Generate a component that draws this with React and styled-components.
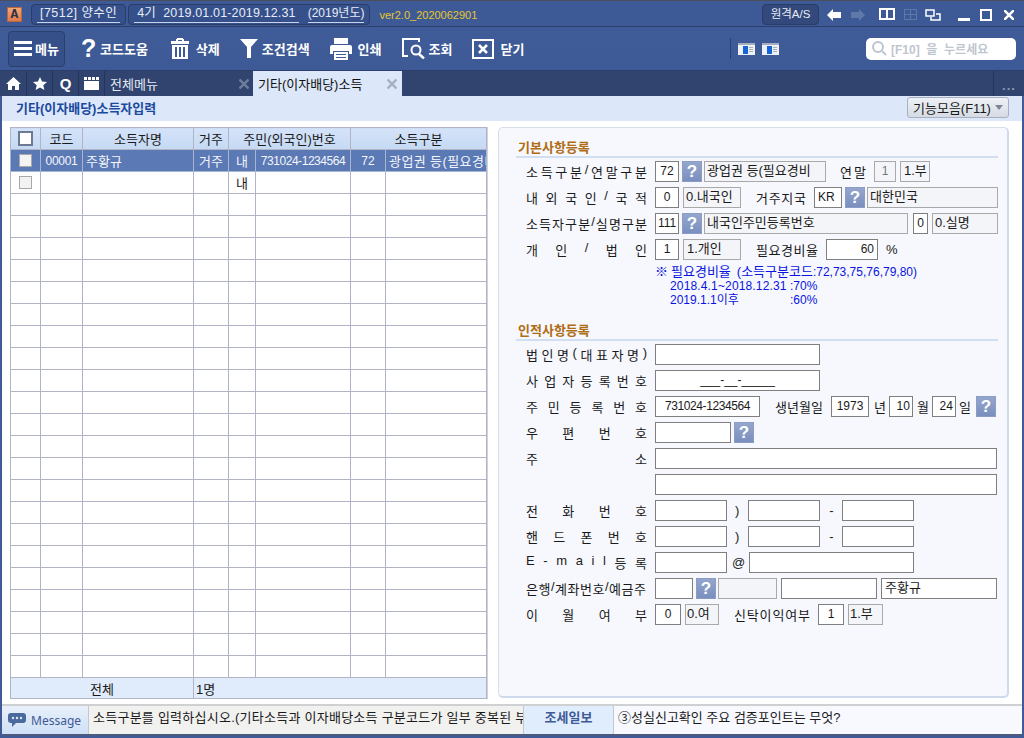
import React from 'react';
import styled, { createGlobalStyle } from 'styled-components';

const GlobalStyle = createGlobalStyle`
  html, body { margin: 0; padding: 0; background: #3f5a96; }
  * { box-sizing: border-box; }
  body {
    font-family: "Liberation Sans", "Noto Sans CJK KR", sans-serif;
    font-size: 13px;
    color: #1a1a1a;
  }
`;

const Window = styled.div`
  width: 1024px;
  height: 738px;
  overflow: hidden;
  display: flex;
  flex-direction: column;
  background: #3f5a96;
`;

/* title bar */
const TitleBar = styled.div`
  height: 26px;
  display: flex;
  align-items: center;
  padding: 2px 0 0 7px;
  background: #3e5a96;
  border-top: 1px solid #4b4f5c;
`;

const Logo = styled.div`
  width: 15px;
  height: 15px;
  background: linear-gradient(#f4a878, #e0794a);
  border: 1px solid #b8673e;
  color: #2c3044;
  font-family: "Liberation Mono", monospace;
  font-size: 13px;
  font-weight: 700;
  line-height: 13px;
  text-align: center;
  margin-right: 9px;
`;

const Pill = styled.div`
  height: 21px;
  display: flex;
  align-items: center;
  gap: 9px;
  padding: 0 5px;
  margin-right: 2px;
  background: #35508a;
  border: 1px solid #2a3c68;
  border-radius: 4px;
`;

const PillText = styled.span`
  height: 17px;
  line-height: 15px;
  padding: 0 ${(p) => p.$pad || 0}px;
  color: #e8ecf6;
  font-size: ${(p) => p.$size || 12.5}px;
  letter-spacing: ${(p) => p.$ls || 0}px;
  border-bottom: 1px solid #c8d2e8;
  white-space: pre;
`;

const Version = styled.span`
  margin-left: 7px;
  color: #e6c62e;
  font-size: 11px;
`;

const TitleRight = styled.div`
  margin-left: auto;
  padding-right: 10px;
  display: flex;
  align-items: center;
`;

const RemoteBtn = styled.div`
  width: 57px;
  height: 21px;
  margin-right: 8px;
  text-align: center;
  line-height: 18px;
  color: #e8ecf6;
  font-size: 11.5px;
  background: #33497c;
  border: 1px solid #2a3c68;
  border-radius: 4px;
`;

const WinIcon = styled.svg`
  display: block;
  margin-left: ${(p) => p.$ml || 0}px;
`;

/* toolbar */
const ToolBar = styled.div`
  height: 45px;
  display: flex;
  align-items: center;
  padding: 0 8px 0 8px;
  background: linear-gradient(#3f5b98, #3e5a96);
  border-top: 1px solid #2c3f6c;
  border-bottom: 1px solid #2c3f6c;
`;

const MenuBtn = styled.div`
  width: 57px;
  height: 36px;
  display: flex;
  align-items: center;
  justify-content: center;
  gap: 3px;
  margin-right: 16px;
  color: #fff;
  font-weight: 700;
  background: #36508a;
  border: 1px solid #2c3f6c;
  border-radius: 4px;
`;

const ToolItem = styled.div`
  display: flex;
  align-items: center;
  gap: ${(p) => p.$gap || 5}px;
  margin-right: ${(p) => p.$mr || 20}px;
  color: #fff;
  font-weight: 700;
  white-space: nowrap;
`;

const QuestionGlyph = styled.span`
  width: 13px;
  font-size: 25px;
  line-height: 25px;
  font-weight: 700;
  font-family: "Liberation Sans", sans-serif;
`;

const ToolRight = styled.div`
  margin-left: auto;
  display: flex;
  align-items: center;
`;

const ToolSep = styled.div`
  width: 1px;
  height: 21px;
  background: #2c3f6c;
  margin-right: 7px;
`;

const MiniIcon = styled.svg`
  display: block;
  margin-right: 7px;
`;

const SearchBox = styled.div`
  width: 150px;
  height: 22px;
  margin-left: 80px;
  display: flex;
  align-items: center;
  gap: 4px;
  padding-left: 6px;
  background: #fff;
  border-radius: 5px;
  color: #c0c6d0;
  font-size: 12px;
  font-weight: 700;
  white-space: pre;
`;

/* tabs */
const TabBar = styled.div`
  height: 25px;
  display: flex;
  background: #30446f;
`;

const IconTab = styled.div`
  width: ${(p) => p.$w || 26}px;
  display: flex;
  align-items: center;
  justify-content: center;
  color: #fff;
  font-weight: 700;
  font-size: 15px;
  border-right: 1px solid #24355a;
`;

const Tab = styled.div`
  width: 149px;
  display: flex;
  align-items: center;
  justify-content: space-between;
  padding: 0 5px;
  margin-right: ${(p) => (p.$active ? 0 : -1)}px;
  color: ${(p) => (p.$active ? '#111' : '#e4e9f4')};
  background: ${(p) => (p.$active ? '#dce8fa' : 'transparent')};
`;

const TabMore = styled.div`
  margin-left: auto;
  width: 31px;
  line-height: 30px;
  text-align: center;
  color: #8c98b4;
  font-weight: 700;
  letter-spacing: 1px;
  border-left: 1px solid #24355a;
`;

/* heading strip */
const SubHeader = styled.div`
  height: 25px;
  margin: 0 2px;
  display: flex;
  align-items: center;
  justify-content: space-between;
  padding: 0 13px 2px 14px;
  background: #dce8fa;
`;

const PageTitle = styled.div`
  color: #1c4a9c;
  font-weight: 700;
`;

const FuncBtn = styled.div`
  width: 102px;
  height: 21px;
  display: flex;
  align-items: center;
  justify-content: space-between;
  padding: 0 5px;
  background: linear-gradient(#eef1f6, #d6dbe4);
  border: 1px solid #a8b0c0;
  border-radius: 3px;
  &::after {
    content: '';
    border: 4px solid transparent;
    border-top: 5px solid #7c8698;
    border-bottom: 0;
  }
`;

/* body */
const Main = styled.div`
  height: 583px;
  margin: 0 2px;
  display: flex;
  align-items: flex-start;
  padding: 6px 0 0 8px;
  background: #fff;
`;

const GridWrap = styled.div`
  width: 478px;
  height: 572px;
  border-right: 1px solid #cfd2da;
`;

const Grid = styled.table`
  width: 476px;
  table-layout: fixed;
  border-collapse: collapse;
`;

const Col = styled.col`
  width: ${(p) => p.$w}px;
`;

const Th = styled.th`
  height: 22px;
  padding: 0;
  font-weight: 400;
  font-size: 13px;
  background: linear-gradient(#d4e3f8, #c5d9f4);
  border: 1px solid #b0b4c4;
`;

const Td = styled.td`
  height: 22px;
  padding: 0 ${(p) => (p.$align === 'left' ? 3 : 0)}px;
  overflow: hidden;
  white-space: nowrap;
  text-align: ${(p) => p.$align || 'center'};
  font-size: ${(p) => p.$size || 13}px;
  letter-spacing: ${(p) => p.$ls || 0}px;
  border: 1px solid ${(p) => (p.$on ? '#a8b5cf' : '#b0b4c4')};
  background: ${(p) => (p.$on ? '#5b79b5' : '#fff')};
  color: ${(p) => (p.$on ? '#f4f6fb' : '#1a1a1a')};
`;

const FootCell = styled.td`
  height: 21px;
  padding: 0 ${(p) => (p.$align === 'left' ? 2 : 0)}px;
  text-align: ${(p) => p.$align || 'center'};
  background: #e0ecfb;
  border: 1px solid #b0b4c4;
`;

const HeadCheck = styled.div`
  width: 15px;
  height: 15px;
  margin: 0 auto;
  background: #fff;
  border: 2px solid #6c7a94;
`;

const RowCheck = styled.div`
  width: 13px;
  height: 13px;
  margin: 0 auto;
  background: #f3f3f3;
  border: 1px solid #a8a8a8;
`;

/* form */
const FormPanel = styled.div`
  width: 511px;
  height: 571px;
  margin-left: 10px;
  padding-top: 12px;
  background: #f6f8fd;
  border: 1px solid #d6deec;
  border-right: 2px solid #cfdaec;
  border-bottom: 2px solid #cfdaec;
  border-radius: 5px;
`;

const SectionTitle = styled.div`
  height: 18px;
  margin: ${(p) => p.$mt || 0}px 9px 3px 17px;
  padding-left: 2px;
  color: #b06c14;
  font-weight: 700;
  line-height: 15px;
  border-bottom: 2px solid #d2dff0;
`;

const Row = styled.div`
  height: 21px;
  margin-bottom: 5px;
  display: flex;
  align-items: center;
  padding-left: 27px;
`;

const Label = styled.div`
  width: ${(p) => p.$w || 121}px;
  margin-left: ${(p) => p.$ml || 0}px;
  margin-right: ${(p) => p.$mr || 0}px;
  flex: none;
  display: flex;
  justify-content: space-between;
  white-space: nowrap;
`;

const Box = styled.div`
  width: ${(p) => p.$w}px;
  height: 21px;
  flex: none;
  margin-left: ${(p) => p.$ml || 0}px;
  padding: 0 ${(p) => p.$pad ?? 2}px;
  overflow: hidden;
  white-space: pre;
  line-height: 18px;
  font-size: ${(p) => p.$size || 13}px;
  letter-spacing: ${(p) => p.$ls || 0}px;
  text-align: ${(p) => p.$align || 'left'};
  background: ${(p) => (p.$read || p.$off ? '#f4f5f8' : '#fff')};
  color: ${(p) => (p.$off ? '#777' : '#1a1a1a')};
  border: 1px solid ${(p) => (p.$read || p.$off ? '#a9a9a9' : '#7f7f7f')};
`;

const Help = styled.div`
  width: 20px;
  height: 21px;
  flex: none;
  margin-left: ${(p) => p.$ml || 3}px;
  text-align: center;
  line-height: 19px;
  color: #fff;
  font-size: 17px;
  font-weight: 700;
  background: linear-gradient(#95a6cd, #7a8fbe);
  border: 1px solid #8b9cc6;
`;

const Unit = styled.span`
  flex: none;
  width: ${(p) => (p.$w ? `${p.$w}px` : 'auto')};
  margin-left: ${(p) => p.$ml || 0}px;
  white-space: nowrap;
`;

const Notes = styled.div`
  margin-left: 156px;
  color: #0a14e0;
  font-size: 12px;
  line-height: 14px;
  white-space: pre;
`;

const NoteHead = styled.div`
  display: flex;
`;

const NoteKr = styled.span`
  font-size: 13px;
  margin-right: ${(p) => p.$mr || 0}px;
`;

const NoteLine = styled.div`
  display: flex;
  padding-left: 15px;
`;

const NoteDate = styled.span`
  width: 120px;
  letter-spacing: ${(p) => p.$ls || 0}px;
`;

/* bottom bar */
const StatusBar = styled.div`
  height: 32px;
  margin: 0 2px;
  display: flex;
  background: #f8f9fe;
  border-top: 2px solid #cfd0d2;
  border-bottom: 2px solid #4a5a80;
`;

const MsgLabel = styled.div`
  width: 87px;
  display: flex;
  align-items: center;
  gap: 5px;
  padding-left: 6px;
  color: #3e5a96;
  font-family: "Noto Sans", sans-serif;
  font-size: 12px;
  background: linear-gradient(#e8f0fb, #cfe0f6);
  border-right: 1px solid #c4c8d0;
`;

const MsgText = styled.div`
  width: 434px;
  line-height: 24px;
  padding-left: 4px;
  overflow: hidden;
  white-space: nowrap;
  background: #f1f1ef;
  letter-spacing: 0.25px;
`;

const NewsLabel = styled.div`
  width: 91px;
  line-height: 24px;
  text-align: center;
  color: #3e5a96;
  font-weight: 700;
  background: #e0edfd;
  border-left: 1px solid #c4c8d0;
  border-right: 1px solid #c4c8d0;
`;

const NewsText = styled.div`
  line-height: 24px;
  padding-left: 4px;
`;

const Spread = ({ text, ...rest }) => (
  <Label {...rest}>
    {Array.from(text).map((c, i) => (
      <span key={i}>{c}</span>
    ))}
  </Label>
);

const CrossIcon = ({ color }) => (
  <svg width="10" height="10" viewBox="0 0 10 10" stroke={color} strokeWidth="2.5">
    <path d="M0.500 0.500l9 9M9.500 0.500l-9 9" />
  </svg>
);

const Mini = () => (
  <MiniIcon width="17" height="12" viewBox="0 0 17 12">
    <rect width="17" height="12" fill="#eef1f5" />
    <rect width="17" height="2" fill="#a4aebf" />
    <rect x="5" y="3" width="5" height="8" fill="#1565d8" />
    <rect x="11" y="4" width="4" height="1" fill="#a8aeb8" />
    <rect x="11" y="6" width="4" height="1" fill="#a8aeb8" />
    <rect x="11" y="8" width="4" height="1" fill="#a8aeb8" />
  </MiniIcon>
);

const W = '#fff';

const TOOLS = [
  { label: '삭제', gap: 7, icon: (
    <svg width="18" height="21" viewBox="0 0 18 21" fill={W}>
      <path d="M6 0h6v1h1v2h5v3H0V3h5V1h1z M7 2v1h4V2z" fillRule="evenodd" />
      <path d="M1 7h16v14H1z M4 9v10h2V9z M8 9v10h2V9z M12 9v10h2V9z" fillRule="evenodd" />
    </svg>
  ) },
  { label: '조건검색', gap: 4, icon: (
    <svg width="18" height="19" viewBox="0 0 18 19" fill={W}>
      <path d="M0 0h18L11 8v11H7V8z" />
    </svg>
  ) },
  { label: '인쇄', gap: 6, icon: (
    <svg width="22" height="22" viewBox="0 0 22 22" fill={W}>
      <path d="M4 0h14v6H4z" />
      <path d="M2 7h18a2 2 0 0 1 2 2v7h-3v-3H3v3H0V9a2 2 0 0 1 2-2z" />
      <path d="M4 14h14v8H4z M6 16v1h10v-1z M6 19v1h10v-1z" fillRule="evenodd" />
    </svg>
  ) },
  { label: '조회', gap: 4, icon: (
    <svg width="23" height="21" viewBox="0 0 23 21" fill="none" stroke={W}>
      <path d="M7 1H1v17h5 M1 1h16v3" strokeWidth="2" />
      <circle cx="14" cy="12" r="4.500" strokeWidth="2" />
      <path d="M17 16l5 4.500" strokeWidth="2.500" />
    </svg>
  ) },
  { label: '닫기', gap: 6, icon: (
    <svg width="22" height="20" viewBox="0 0 22 20" fill="none" stroke={W}>
      <rect x="1" y="1" width="20" height="18" strokeWidth="2" />
      <path d="M7 6l8 8M15 6l-8 8" strokeWidth="2.500" />
    </svg>
  ) },
];

const COLS = [30, 42, 111, 35, 27, 95, 35, 101];
const EMPTY_ROWS = Array.from({ length: 22 });

const App = () => (
  <Window>
    <GlobalStyle />
    <TitleBar>
      <Logo>A</Logo>
      <Pill>
        <PillText $pad={3} $ls={0.45}>[7512] 양수인</PillText>
      </Pill>
      <Pill>
        <PillText $pad={3} $ls={0.15}>4기  2019.01.01-2019.12.31</PillText>
        <PillText $size={12}>(2019년도)</PillText>
      </Pill>
      <Version>ver2.0_2020062901</Version>
      <TitleRight>
        <RemoteBtn>원격A/S</RemoteBtn>
        <WinIcon width="14" height="12" viewBox="0 0 14 12" fill={W}><path d="M0 6l6-6v3h8v6H6v3z" /></WinIcon>
        <WinIcon $ml={10} width="14" height="12" viewBox="0 0 14 12" fill="#5f78aa"><path d="M14 6L8 0v3H0v6h8v3z" /></WinIcon>
        <WinIcon $ml={14} width="16" height="13" viewBox="0 0 16 13" fill="none" stroke={W} strokeWidth="2"><path d="M1 1h14v10H1z M8 1v11" /></WinIcon>
        <WinIcon $ml={9} width="13" height="11" viewBox="0 0 13 11" fill="none" stroke="#5f78aa"><path d="M.5.5h12v10H.5z M.5 5.5h12 M6.500 .5v10" /></WinIcon>
        <WinIcon $ml={8} width="16" height="12" viewBox="0 0 16 12" fill="none" stroke={W} strokeWidth="1.500"><path d="M1 1h8v6H1z M11 5h4v6H6V8" /></WinIcon>
        <WinIcon $ml={17} width="12" height="12" viewBox="0 0 12 12" fill={W}><rect y="9" width="12" height="3" /></WinIcon>
        <WinIcon $ml={10} width="12" height="12" viewBox="0 0 12 12" fill="none" stroke={W} strokeWidth="2"><rect x="1" y="1" width="10" height="10" /></WinIcon>
        <WinIcon $ml={12} width="10" height="10" viewBox="0 0 10 10" stroke={W} strokeWidth="2.500"><path d="M0 0l10 10M10 0L0 10" /></WinIcon>
      </TitleRight>
    </TitleBar>

    <ToolBar>
      <MenuBtn>
        <svg width="18" height="16" viewBox="0 0 18 16" fill={W}>
          <rect width="18" height="3" /><rect y="6" width="18" height="3" /><rect y="12" width="18" height="3" />
        </svg>
        메뉴
      </MenuBtn>
      <ToolItem $gap={6} $mr={23}><QuestionGlyph>?</QuestionGlyph>코드도움</ToolItem>
      {TOOLS.map((t) => (
        <ToolItem key={t.label} $gap={t.gap}>{t.icon}{t.label}</ToolItem>
      ))}
      <ToolRight>
        <ToolSep />
        <Mini />
        <Mini />
        <SearchBox>
          <svg width="15" height="15" viewBox="0 0 15 15" fill="none" stroke="#bcc4d2" strokeWidth="2">
            <circle cx="6" cy="6" r="5" /><path d="M10 10l4 4" />
          </svg>
          {'[F10]  을  누르세요'}
        </SearchBox>
      </ToolRight>
    </ToolBar>

    <TabBar>
      <IconTab $w={27}>
        <svg width="15" height="13" viewBox="0 0 15 13" fill={W}><path d="M7.500 0L15 7h-2v6H9V9H6v4H2V7H0z" /></svg>
      </IconTab>
      <IconTab>
        <svg width="14" height="13" viewBox="0 0 14 13" fill={W}><path d="M7 0l2 4.500 5 .5-3.700 3.200L11.400 13 7 10.400 2.600 13l1.100-4.800L0 5l5-.5z" /></svg>
      </IconTab>
      <IconTab>Q</IconTab>
      <IconTab>
        <svg width="15" height="13" viewBox="0 0 15 13" fill={W}><path d="M0 4h15v9H0z M0 0h3v3H0z M4 0h3v3H4z M8 0h3v3H8z M12 0h3v3h-3z" /></svg>
      </IconTab>
      <Tab>전체메뉴<CrossIcon color="#6f7d9c" /></Tab>
      <Tab $active>기타(이자배당)소득<CrossIcon color="#a8b2c4" /></Tab>
      <TabMore>...</TabMore>
    </TabBar>

    <SubHeader>
      <PageTitle>기타(이자배당)소득자입력</PageTitle>
      <FuncBtn>기능모음(F11)</FuncBtn>
    </SubHeader>

    <Main>
      <GridWrap>
        <Grid>
          <colgroup>
            {COLS.map((w, i) => <Col key={i} $w={w} />)}
          </colgroup>
          <thead>
            <tr>
              <Th><HeadCheck /></Th>
              <Th>코드</Th>
              <Th>소득자명</Th>
              <Th>거주</Th>
              <Th colSpan={2}>주민(외국인)번호</Th>
              <Th colSpan={2}>소득구분</Th>
            </tr>
          </thead>
          <tbody>
            <tr>
              <Td $on><RowCheck /></Td>
              <Td $on $size={12} $ls={-0.3}>00001</Td>
              <Td $on $align="left">주황규</Td>
              <Td $on>거주</Td>
              <Td $on>내</Td>
              <Td $on $size={12} $ls={-0.45}>731024-1234564</Td>
              <Td $on $size={12}>72</Td>
              <Td $on $align="left" $ls={0.4}>광업권 등(필요경비</Td>
            </tr>
            <tr>
              <Td><RowCheck /></Td>
              <Td /><Td /><Td />
              <Td>내</Td>
              <Td /><Td /><Td />
            </tr>
            {EMPTY_ROWS.map((_, i) => (
              <tr key={i}>
                {COLS.map((__, j) => <Td key={j} />)}
              </tr>
            ))}
          </tbody>
          <tfoot>
            <tr>
              <FootCell colSpan={3}>전체</FootCell>
              <FootCell colSpan={5} $align="left">1명</FootCell>
            </tr>
          </tfoot>
        </Grid>
      </GridWrap>

      <FormPanel>
        <SectionTitle>기본사항등록</SectionTitle>
        <Row>
          <Spread text="소득구분/연말구분" $mr={8} />
          <Box $w={24} $size={12} $align="center" $pad={0}>72</Box>
          <Help>?</Help>
          <Box $read $w={122} $ml={2}>광업권 등(필요경비</Box>
          <Spread text="연말" $w={26} $ml={14} />
          <Box $off $w={22} $ml={8} $size={12} $align="center">1</Box>
          <Box $read $w={30} $ml={4} $pad={3}>1.부</Box>
        </Row>
        <Row>
          <Spread text="내외국인/국적" $mr={8} />
          <Box $w={24} $size={12} $align="center" $pad={0}>0</Box>
          <Box $read $w={58} $ml={4}>0.내국인</Box>
          <Spread text="거주지국" $w={50} $ml={15} />
          <Box $w={28} $ml={8} $size={12} $pad={3}>KR</Box>
          <Help>?</Help>
          <Box $read $w={131} $ml={2}>대한민국</Box>
        </Row>
        <Row>
          <Spread text="소득자구분/실명구분" $mr={8} />
          <Box $w={24} $size={12} $align="center" $pad={0}>111</Box>
          <Help>?</Help>
          <Box $read $w={204} $ml={2}>내국인주민등록번호</Box>
          <Box $w={15} $ml={5} $size={12} $align="center" $pad={0}>0</Box>
          <Box $read $w={66} $ml={4}>0.실명</Box>
        </Row>
        <Row>
          <Spread text="개인/법인" $mr={8} />
          <Box $w={24} $size={12} $align="center" $pad={0}>1</Box>
          <Box $read $w={58} $ml={4} $pad={3}>1.개인</Box>
          <Spread text="필요경비율" $w={62} $ml={15} />
          <Box $w={52} $ml={8} $size={12} $align="right" $pad={3}>60</Box>
          <Unit $ml={8}>%</Unit>
        </Row>
        <Notes>
          <NoteHead>
            <NoteKr $mr={3}>※</NoteKr>
            <NoteKr $mr={6}>필요경비율</NoteKr>
            <NoteKr>(소득구분코드</NoteKr>
            :72,73,75,76,79,80)
          </NoteHead>
          <NoteLine><NoteDate $ls={0.15}>2018.4.1~2018.12.31</NoteDate>:70%</NoteLine>
          <NoteLine><NoteDate>2019.1.1이후</NoteDate>:60%</NoteLine>
        </Notes>

        <SectionTitle $mt={16}>인적사항등록</SectionTitle>
        <Row>
          <Spread text="법인명(대표자명)" $mr={8} />
          <Box $w={165} />
        </Row>
        <Row>
          <Spread text="사업자등록번호" $mr={8} />
          <Box $w={165} $align="center" $size={12}>___-__-_____</Box>
        </Row>
        <Row>
          <Spread text="주민등록번호" $mr={8} />
          <Box $w={105} $size={12} $ls={-0.4} $align="center">731024-1234564</Box>
          <Unit $ml={15} $w={48}>생년월일</Unit>
          <Box $w={38} $ml={8} $size={12} $align="center">1973</Box>
          <Unit $ml={5}>년</Unit>
          <Box $w={24} $ml={3} $size={12} $align="right">10</Box>
          <Unit $ml={4}>월</Unit>
          <Box $w={24} $ml={3} $size={12} $align="right">24</Box>
          <Unit $ml={3}>일</Unit>
          <Help $ml={5}>?</Help>
        </Row>
        <Row>
          <Spread text="우편번호" $mr={8} />
          <Box $w={76} />
          <Help>?</Help>
        </Row>
        <Row>
          <Spread text="주소" $mr={8} />
          <Box $w={342} />
        </Row>
        <Row>
          <Box $w={342} $ml={129} />
        </Row>
        <Row>
          <Spread text="전화번호" $mr={8} />
          <Box $w={72} />
          <Unit $ml={8}>)</Unit>
          <Box $w={72} $ml={9} />
          <Unit $ml={9}>-</Unit>
          <Box $w={72} $ml={8} />
        </Row>
        <Row>
          <Spread text="핸드폰번호" $mr={8} />
          <Box $w={72} />
          <Unit $ml={8}>)</Unit>
          <Box $w={72} $ml={9} />
          <Unit $ml={9}>-</Unit>
          <Box $w={72} $ml={8} />
        </Row>
        <Row>
          <Spread text="E-mail등록" $mr={8} />
          <Box $w={72} />
          <Unit $ml={5}>@</Unit>
          <Box $w={165} $ml={4} />
        </Row>
        <Row>
          <Spread text="은행/계좌번호/예금주" $w={120} $mr={9} />
          <Box $w={38} />
          <Help>?</Help>
          <Box $off $w={59} $ml={2} />
          <Box $w={96} $ml={4} />
          <Box $w={116} $ml={4} $pad={3}>주황규</Box>
        </Row>
        <Row>
          <Spread text="이월여부" $mr={8} />
          <Box $w={26} $size={12} $align="center">0</Box>
          <Box $read $w={34} $ml={4} $pad={1}>0.여</Box>
          <Spread text="신탁이익여부" $w={76} $ml={15} />
          <Box $w={26} $ml={8} $size={12} $align="center">1</Box>
          <Box $read $w={35} $ml={4} $pad={1}>1.부</Box>
        </Row>
      </FormPanel>
    </Main>

    <StatusBar>
      <MsgLabel>
        <svg width="18" height="14" viewBox="0 0 18 14" fill="#4a6a9c">
          <path d="M3 0h12a3 3 0 0 1 3 3v4a3 3 0 0 1-3 3H8l-4 4v-4H3a3 3 0 0 1-3-3V3a3 3 0 0 1 3-3z" />
          <circle cx="5" cy="5" r="1.200" fill="#dfe8f6" /><circle cx="9" cy="5" r="1.200" fill="#dfe8f6" /><circle cx="13" cy="5" r="1.200" fill="#dfe8f6" />
        </svg>
        Message
      </MsgLabel>
      <MsgText>소득구분를 입력하십시오.(기타소득과 이자배당소득 구분코드가 일부 중복된 부</MsgText>
      <NewsLabel>조세일보</NewsLabel>
      <NewsText>③성실신고확인 주요 검증포인트는 무엇?</NewsText>
    </StatusBar>
  </Window>
);

export default App;
